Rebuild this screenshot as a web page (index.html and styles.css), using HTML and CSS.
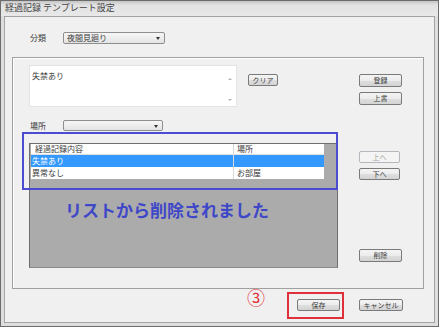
FILE: index.html
```html
<!DOCTYPE html>
<html lang="ja">
<head>
<meta charset="UTF-8">
<title>経過記録 テンプレート設定</title>
<link rel="stylesheet" href="styles.css">
</head>
<body>

<div class="window">
    <div class="titlebar">経過記録 テンプレート設定</div>

    <div class="client">
        <div class="kind-row">
            <span class="field-label">分類</span>
            <div class="combo kind-combo">夜間見廻り<span class="arrow"></span></div>
        </div>

        <div class="group">
            <div class="left-col">
                <div class="memo-row">
                    <div class="memo">
                        <span class="memo-text">失禁あり</span>
                        <div class="vscroll">
                            <span class="tri up"></span>
                            <span class="tri down"></span>
                        </div>
                    </div>
                    <button class="btn clear-btn">クリア</button>
                </div>

                <div class="place-row">
                    <span class="field-label">場所</span>
                    <div class="combo place-combo"><span class="arrow"></span></div>
                </div>

                <div class="list">
                    <div class="list-row head">
                        <span class="col-a">経過記録内容</span>
                        <span class="col-b">場所</span>
                    </div>
                    <div class="list-row selected">
                        <span class="col-a">失禁あり</span>
                        <span class="col-b"></span>
                    </div>
                    <div class="list-row">
                        <span class="col-a">異常なし</span>
                        <span class="col-b">お部屋</span>
                    </div>
                </div>
            </div>

            <div class="right-col">
                <button class="btn side-btn b-register">登録</button>
                <button class="btn side-btn b-overwrite">上書</button>
                <button class="btn side-btn b-up" disabled>上へ</button>
                <button class="btn side-btn b-down">下へ</button>
                <button class="btn side-btn b-delete">削除</button>
            </div>
        </div>

        <div class="footer">
            <button class="btn foot-btn">保存</button>
            <button class="btn foot-btn">キャンセル</button>
        </div>
    </div>

    <!-- annotations drawn over the dialog -->
    <div class="note-box"></div>
    <div class="note-text">リストから削除されました</div>
    <div class="step-mark">③</div>
    <div class="save-box"></div>
</div>

</body>
</html>
```

FILE: styles.css
```css
* {
    box-sizing: border-box;
}
body {
    margin: 0;
    background-color: #fff;
    font-family: 'Noto Sans CJK JP', 'DejaVu Sans', sans-serif;
    font-size: 8px;
    color: #3a3a3a;
}
.window {
    position: relative;
    width: 439px;
    height: 327px;
    border: 1px solid #6c6c6c;
    background-color: #dedede;
    overflow: hidden;
}
.titlebar {
    height: 15px;
    line-height: 14px;
    padding-left: 4px;
    background: linear-gradient(#c4c4c4, #e2e2e2 4px, #e8e8e8);
    color: #444;
    font-size: 9px;
    white-space: nowrap;
}
.client {
    height: 307px;
    margin: 0 3px;
    border: 1px solid #a4a4a4;
    background-color: #f0f0f0;
}
.kind-row {
    display: flex;
    align-items: center;
    height: 12px;
    margin-top: 15px;
    padding-left: 25px;
}
.field-label {
    width: 33px;
    line-height: 12px;
}
.combo {
    position: relative;
    height: 12px;
    line-height: 10px;
    padding-left: 3px;
    border: 1px solid #8e8e8e;
    border-radius: 2px;
    background: linear-gradient(#f6f6f6, #e4e4e4);
}
.combo .arrow {
    position: absolute;
    right: 4px;
    top: 4px;
    border-left: 2px solid transparent;
    border-right: 2px solid transparent;
    border-top: 3px solid #333;
}
.kind-combo {
    width: 102px;
}
.group {
    display: flex;
    width: 412px;
    height: 232px;
    margin: 13px 0 0 7px;
    padding: 7px 0 0 16px;
    border: 1px solid #a0a0a0;
    box-shadow: inset 1px 1px #fff;
}
.left-col {
    width: 309px;
}
.memo-row {
    display: flex;
    height: 42px;
}
.memo {
    display: flex;
    justify-content: space-between;
    width: 208px;
    border: 1px solid #e4e4e4;
    background-color: #fff;
}
.memo-text {
    padding: 5px 0 0 2px;
    line-height: 10px;
}
.vscroll {
    display: flex;
    flex-direction: column;
    justify-content: space-between;
    align-items: center;
    width: 12px;
    padding: 12px 0 5px;
}
.tri {
    border-left: 2px solid transparent;
    border-right: 2px solid transparent;
}
.tri.up {
    border-bottom: 2px solid #b4b4b4;
}
.tri.down {
    border-top: 2px solid #b4b4b4;
}
.btn {
    display: block;
    padding: 0;
    height: 13px;
    border: 1px solid #7a7a7a;
    border-radius: 2px;
    background: linear-gradient(#f4f4f4, #ececec 50%, #dfdfdf 51%, #d3d3d3);
    font-family: inherit;
    font-size: 7px;
    line-height: 11px;
    color: #3a3a3a;
    text-align: center;
}
.btn:disabled {
    border-color: #b4b8bc;
    background: #f4f4f4;
    color: #a0a0a0;
}
.clear-btn {
    width: 30px;
    height: 12px;
    margin: 9px 0 0 11px;
}
.place-row {
    display: flex;
    align-items: center;
    height: 11px;
    margin-top: 13px;
    padding-left: 1px;
}
.place-combo {
    width: 100px;
    height: 11px;
}
.list {
    height: 125px;
    margin-top: 12px;
    padding-left: 1px;
    border: 1px solid #6e6e6e;
    border-bottom-color: #8a8a8a;
    background-color: #ababab;
}
.list-row {
    display: flex;
    width: 293px;
    height: 12px;
    line-height: 12px;
    background-color: #fff;
    white-space: nowrap;
    overflow: hidden;
}
.list-row.head {
    height: 11px;
    line-height: 10px;
    border-bottom: 1px solid #e0e0e0;
}
.list-row.selected {
    background-color: #3399ff;
    color: #fff;
}
.col-a {
    width: 203px;
    padding-left: 1px;
    border-right: 1px solid #d8d8d8;
}
.head .col-a {
    padding-left: 4px;
}
.col-b {
    padding-left: 3px;
}
.right-col {
    margin-left: 21px;
    width: 43px;
}
.side-btn {
    width: 43px;
}
.b-register {
    margin-top: 9px;
}
.b-overwrite {
    margin-top: 5px;
}
.b-up {
    width: 41px;
    height: 12px;
    margin-top: 46px;
}
.b-down {
    width: 41px;
    height: 12px;
    margin-top: 5px;
}
.b-delete {
    margin-top: 69px;
}
.footer {
    display: flex;
    justify-content: flex-end;
    gap: 19px;
    margin-top: 10px;
    padding-right: 31px;
}
.foot-btn {
    width: 43px;
    height: 12px;
}
.foot-btn + .foot-btn {
    width: 44px;
}

/* annotations */
.note-box {
    position: absolute;
    left: 21px;
    top: 131px;
    width: 316px;
    height: 58px;
    border: 2px solid #4c4cd0;
}
.note-text {
    position: absolute;
    left: 64px;
    top: 198px;
    font-size: 17px;
    font-weight: bold;
    line-height: 22px;
    color: #3f47c9;
    white-space: nowrap;
}
.step-mark {
    position: absolute;
    left: 246px;
    top: 286px;
    font-size: 18px;
    line-height: 20px;
    color: #e0303a;
}
.save-box {
    position: absolute;
    left: 286px;
    top: 291px;
    width: 57px;
    height: 27px;
    border: 2px solid #e0303a;
}
```
